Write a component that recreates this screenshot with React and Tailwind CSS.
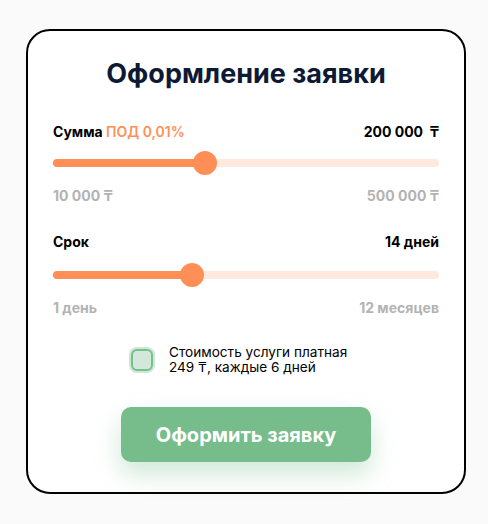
import React from 'react';

const Slider = ({ fill }) => (
    <div className="relative h-[8px] rounded-full bg-[#fde9de]">
        <div className="h-full rounded-full bg-[#ff8f57]" style={{ width: fill }}></div>
        <div
            className="absolute top-1/2 w-[24px] h-[24px] -translate-x-1/2 -translate-y-1/2 rounded-full bg-[#ff8f57]"
            style={{ left: fill }}
        ></div>
    </div>
);

const App = () => {
    return (
        <div className="min-h-[524px] bg-[#fafafa] pt-[29px] pl-[26px] font-['Inter','Liberation_Sans',sans-serif]">
            <div className="w-[440px] h-[465px] border-2 border-black rounded-[24px] bg-white px-[25px] pt-[27px] flex flex-col">
                {/* Title */}
                <h1 className="text-center text-[27px] leading-[32px] font-bold text-[#0e1a33]">
                    Оформление заявки
                </h1>

                {/* Amount */}
                <div className="mt-[32px] flex justify-between text-[14px] leading-[20px] font-bold text-black">
                    <span>
                        Сумма <span className="text-[#ff8f57] font-semibold">ПОД 0,01%</span>
                    </span>
                    <span>200 000 &nbsp;₸</span>
                </div>
                <div className="mt-[17px]">
                    <Slider fill="152px" />
                </div>
                <div className="mt-[19px] flex justify-between text-[14px] leading-[20px] font-bold text-[#b3b3b3]">
                    <span>10 000 ₸</span>
                    <span>500 000 ₸</span>
                </div>

                {/* Term */}
                <div className="mt-[26px] flex justify-between text-[14px] leading-[20px] font-bold text-black">
                    <span>Срок</span>
                    <span>14 дней</span>
                </div>
                <div className="mt-[19px]">
                    <Slider fill="139px" />
                </div>
                <div className="mt-[19px] flex justify-between text-[14px] leading-[20px] font-bold text-[#b3b3b3]">
                    <span>1 день</span>
                    <span>12 месяцев</span>
                </div>

                {/* Checkbox */}
                <div className="mt-[27px] pl-[76px] flex items-center gap-[14px]">
                    <div className="w-[26px] h-[26px] rounded-[8px] bg-[#cde8d5] p-[2px] shrink-0">
                        <div className="w-full h-full rounded-[6px] border-2 border-[#79bf8c] bg-[#d3e8da]"></div>
                    </div>
                    <div className="flex flex-col text-[13.6px] leading-[15px] text-black">
                        <span>Стоимость услуги платная</span>
                        <span>249 ₸, каждые 6 дней</span>
                    </div>
                </div>

                {/* Button */}
                <div className="mt-[32px] flex justify-center">
                    <button className="w-[250px] h-[55px] rounded-[10px] bg-[#77bd8b] text-white text-[20px] font-bold shadow-[0_12px_24px_rgba(119,189,139,0.35)]">
                        Оформить заявку
                    </button>
                </div>
            </div>
        </div>
    );
};

export default App;
